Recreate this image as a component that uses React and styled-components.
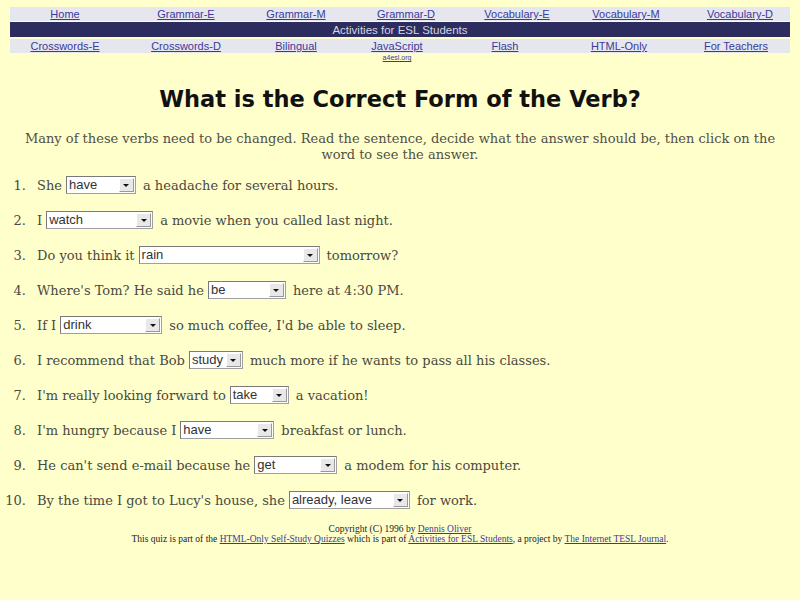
import React from "react";
import styled, { createGlobalStyle } from "styled-components";

const GlobalStyle = createGlobalStyle`
  html, body {
    margin: 0;
    padding: 0;
    background: #ffffcc;
  }
  body {
    font-family: "DejaVu Serif", serif;
  }
`;

const Page = styled.div`
  padding: 7px 5px 40px;
  min-height: 600px;
  box-sizing: border-box;
  background: #ffffcc;
`;

const NavRow = styled.div`
  display: grid;
  grid-template-columns: ${({ cols }) => cols};
  background: #e6e6ee;
  margin: 0 5px;
  height: 14px;
  align-items: center;
  margin-bottom: ${({ gap }) => gap || 0}px;
`;

const NavCell = styled.div`
  display: flex;
  flex-direction: column;
  align-items: center;
  position: relative;
`;

const NavLink = styled.a`
  font-family: "Liberation Sans", Arial, sans-serif;
  font-size: 11px;
  line-height: 14px;
  color: #3a3a9a;
  text-decoration: underline;
`;

const SubLink = styled.a`
  position: absolute;
  top: 15px;
  font-family: "Liberation Sans", Arial, sans-serif;
  font-size: 7px;
  line-height: 8px;
  color: #3a3a9a;
  text-decoration: underline;
`;

const Banner = styled.div`
  background: #2c2c5e;
  margin: 0 5px 2px;
  height: 15px;
  display: flex;
  align-items: center;
  justify-content: center;
  font-family: "Liberation Sans", Arial, sans-serif;
  font-size: 11.5px;
  color: #d4d4e4;
`;

const Title = styled.h1`
  margin: 31px 0 0;
  text-align: center;
  font-family: "DejaVu Sans", "Comic Sans MS", sans-serif;
  font-weight: bold;
  font-size: 22.5px;
  line-height: 30px;
  color: #111;
`;

const Intro = styled.p`
  margin: 17px 12px 0;
  text-align: center;
  font-size: 13px;
  line-height: 16px;
  color: #505048;
`;

const List = styled.div`
  margin: 12px 0 0 0;
  display: flex;
  flex-direction: column;
  gap: 15px;
`;

const Row = styled.div`
  display: flex;
  align-items: center;
  height: 20px;
  font-size: 13px;
  color: #4a4a40;
  white-space: pre;
`;

const Num = styled.span`
  width: 21px;
  margin-right: 11px;
  text-align: right;
  flex: none;
`;

const Dropdown = styled.span`
  display: inline-flex;
  align-items: stretch;
  width: ${({ w }) => w}px;
  height: 18px;
  box-sizing: border-box;
  border: 1px solid #a0a0a0;
  border-top-color: #7a7a7a;
  border-left-color: #7a7a7a;
  background: #fff;
  margin: 0 7px 0 4px;
`;

const Value = styled.span`
  flex: 1;
  font-family: "Liberation Sans", Arial, sans-serif;
  font-size: 13px;
  line-height: 16px;
  color: #333;
  padding-left: 2px;
  overflow: hidden;
`;

const Arrow = styled.span`
  width: 13px;
  margin: 1px;
  background: #e8e8e8;
  border: 1px solid #fff;
  border-right-color: #999;
  border-bottom-color: #999;
  display: flex;
  align-items: center;
  justify-content: center;
  &::after {
    content: "";
    border-left: 3px solid transparent;
    border-right: 3px solid transparent;
    border-top: 3px solid #111;
  }
`;

const Footer = styled.div`
  margin-top: 14px;
  text-align: center;
  font-family: "Liberation Serif", "Times New Roman", serif;
  font-size: 9.5px;
  line-height: 10px;
  color: #222;
  a {
    color: #3a3a9a;
    text-decoration: underline;
  }
`;

const topLinks = [
  "Home",
  "Grammar-E",
  "Grammar-M",
  "Grammar-D",
  "Vocabulary-E",
  "Vocabulary-M",
  "Vocabulary-D",
];

const bottomLinks = [
  "Crosswords-E",
  "Crosswords-D",
  "Bilingual",
  "JavaScript",
  "Flash",
  "HTML-Only",
  "For Teachers",
];

const questions = [
  ["She", "have", 70, "a headache for several hours."],
  ["I", "watch", 107, "a movie when you called last night."],
  ["Do you think it", "rain", 181, "tomorrow?"],
  ["Where's Tom? He said he", "be", 78, "here at 4:30 PM."],
  ["If I", "drink", 102, "so much coffee, I'd be able to sleep."],
  ["I recommend that Bob", "study", 54, "much more if he wants to pass all his classes."],
  ["I'm really looking forward to", "take", 59, "a vacation!"],
  ["I'm hungry because I", "have", 94, "breakfast or lunch."],
  ["He can't send e-mail because he", "get", 83, "a modem for his computer."],
  ["By the time I got to Lucy's house, she", "already, leave", 121, "for work."],
];

const App = () => {
  return (
    <Page>
      <GlobalStyle />
      <NavRow gap={1} cols="110px 132px 88px 132px 90px 128px 1fr">
        {topLinks.map((l) => (
          <NavCell key={l}>
            <NavLink href="#">{l}</NavLink>
          </NavCell>
        ))}
      </NavRow>
      <Banner>Activities for ESL Students</Banner>
      <NavRow cols="110px 132px 88px 114px 102px 126px 1fr">
        {bottomLinks.map((l) => (
          <NavCell key={l}>
            <NavLink href="#">{l}</NavLink>
            {l === "JavaScript" && <SubLink href="#">a4esl.org</SubLink>}
          </NavCell>
        ))}
      </NavRow>

      <Title>What is the Correct Form of the Verb?</Title>
      <Intro>
        Many of these verbs need to be changed. Read the sentence, decide what
        the answer should be, then click on the word to see the answer.
      </Intro>

      <List>
        {questions.map(([before, word, w, after], i) => (
          <Row key={i}>
            <Num>{i + 1}.</Num>
            {before}
            <Dropdown w={w}>
              <Value>{word}</Value>
              <Arrow />
            </Dropdown>
            {after}
          </Row>
        ))}
      </List>

      <Footer>
        Copyright (C) 1996 by <a href="#">Dennis Oliver</a>
        <br />
        This quiz is part of the <a href="#">HTML-Only Self-Study Quizzes</a>{" "}
        which is part of <a href="#">Activities for ESL Students</a>, a project
        by <a href="#">The Internet TESL Journal</a>.
      </Footer>
    </Page>
  );
};

export default App;
